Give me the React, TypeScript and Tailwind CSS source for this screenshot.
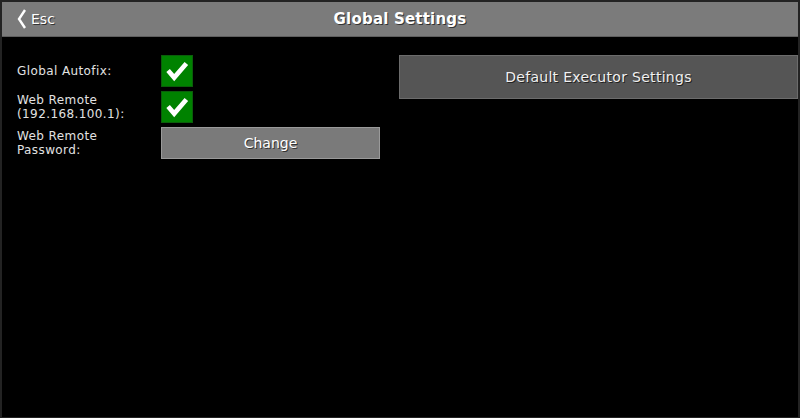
import React from 'react';

const font = { fontFamily: '"DejaVu Sans", "Liberation Sans", sans-serif' };

function CheckBox() {
  return (
    <div className="w-[32px] h-[32px] bg-[#008200] border border-[#0b5e0b] flex items-center justify-center">
      <svg width="32" height="32" viewBox="0 0 32 32">
        <polyline
          points="6.5,15.5 13,23 26,8"
          fill="none"
          stroke="#ffffff"
          strokeWidth="5"
          strokeLinejoin="miter"
        />
      </svg>
    </div>
  );
}

function Row({ label, children }: { label: React.ReactNode; children: React.ReactNode }) {
  return (
    <div className="flex items-center h-[32px]">
      <div className="w-[144px] text-[12px] leading-[14px] tracking-[0.4px] text-[#e2e2e2]">{label}</div>
      {children}
    </div>
  );
}

export default function App() {
  return (
    <div
      className="w-[800px] h-[418px] bg-black border-t-2 border-x-2 border-b border-[#232323] flex flex-col overflow-hidden"
      style={font}
    >
      <header className="h-[35px] bg-[#7b7b7b] border-b border-[#5e5e5e] relative flex items-center justify-center shrink-0">
        <div className="absolute left-[15px] top-0 h-full flex items-center gap-[4px]">
          <svg width="10" height="22" viewBox="0 0 10 22">
            <polyline points="8,2 2,11 8,20" fill="none" stroke="#ffffff" strokeWidth="2.4" />
          </svg>
          <span className="text-[14px] text-white [text-shadow:1px_1px_0_#333]">Esc</span>
        </div>
        <h1 className="text-[15px] font-bold tracking-[0.2px] text-white [text-shadow:1px_1px_0_#333]">Global Settings</h1>
      </header>

      <div className="flex pt-[18px] pl-[15px]">
        <div className="w-[365px] flex flex-col gap-[4px]">
          <Row label="Global Autofix:">
            <CheckBox />
          </Row>
          <Row
            label={
              <>
                Web Remote
                <br />
                (192.168.100.1):
              </>
            }
          >
            <CheckBox />
          </Row>
          <Row
            label={
              <>
                Web Remote
                <br />
                Password:
              </>
            }
          >
            <button className="w-[219px] h-[32px] bg-[#7a7a7a] border border-[#9a9a9a] text-[14px] text-white [text-shadow:1px_1px_0_#333]">
              Change
            </button>
          </Row>
        </div>
        <div className="flex-1 pl-[17px]">
          <button className="w-full h-[44px] bg-[#555555] border border-[#6c6c6c] text-[14px] tracking-[0.3px] text-[#f0f0f0] [text-shadow:1px_1px_0_#222]">
            Default Executor Settings
          </button>
        </div>
      </div>
    </div>
  );
}
